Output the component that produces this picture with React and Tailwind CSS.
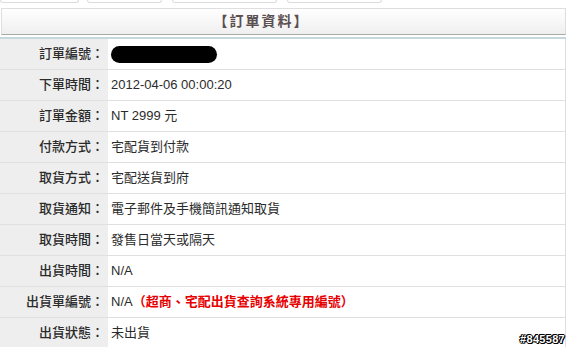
import React from "react";

const rows = [
  { label: "訂單編號：", value: "__blob__" },
  { label: "下單時間：", value: "2012-04-06 00:00:20" },
  { label: "訂單金額：", value: "NT 2999 元" },
  { label: "付款方式：", value: "宅配貨到付款" },
  { label: "取貨方式：", value: "宅配送貨到府" },
  { label: "取貨通知：", value: "電子郵件及手機簡訊通知取貨" },
  { label: "取貨時間：", value: "發售日當天或隔天" },
  { label: "出貨時間：", value: "N/A" },
  { label: "出貨單編號：", value: "N/A", note: "（超商、宅配出貨查詢系統專用編號）" },
  { label: "出貨狀態：", value: "未出貨" },
];

const tabs = [
  "w-[79px]",
  "w-[75px] ml-[8px]",
  "w-[105px] ml-[10px]",
  "w-[95px] ml-[10px]",
];

function App() {
  return (
    <div
      className="relative w-[572px] h-[347px] overflow-hidden bg-white text-[13px] text-[#2b2b2b]"
      style={{ fontFamily: '"Liberation Sans", "Noto Sans CJK TC", sans-serif' }}
    >
      <div className="flex h-[3px]">
        {tabs.map((t, i) => (
          <div
            key={i}
            className={`${t} h-[3px] border-x border-b border-[#dcdcdc] rounded-b-[4px] bg-white`}
          />
        ))}
      </div>

      <div className="mt-[5px] ml-px w-[565px] h-[27px] border border-[#dedede] border-b-[#a9a9a9] bg-gradient-to-b from-white to-[#efefef] flex items-center justify-center">
        <span className="font-bold text-[#5b5050] text-[14px] tracking-[2px] -ml-[44px]">【訂單資料】</span>
      </div>

      <div className="mt-[2px] w-[566px] h-[2px] bg-[#c4d8de]" />

      <div className="w-[566px] border-r border-[#dedede]">
        {rows.map((r, i) => (
          <div key={i} className="flex h-[31px] border-b border-[#e0e0e0]">
            <div className="w-[108px] bg-[#eeeeee] flex items-center justify-end pr-[4px] whitespace-nowrap font-medium">
              {r.label}
            </div>
            <div className="flex-1 flex items-center pl-[3px] whitespace-nowrap">
              {r.value === "__blob__" ? (
                <div className="w-[106px] h-[17px] bg-black rounded-full" />
              ) : (
                <span>{r.value}</span>
              )}
              {r.note && <span className="text-[#e60000] font-bold">{r.note}</span>}
            </div>
          </div>
        ))}
      </div>

      <div
        className="absolute right-[7px] bottom-[2px] text-[11px] font-bold text-white leading-none tracking-[0.3px]"
        style={{ textShadow: "1px 0 #000, -1px 0 #000, 0 1px #000, 0 -1px #000, 1px 1px #000, -1px -1px #000" }}
      >
        #845587
      </div>
    </div>
  );
}

export default App;
